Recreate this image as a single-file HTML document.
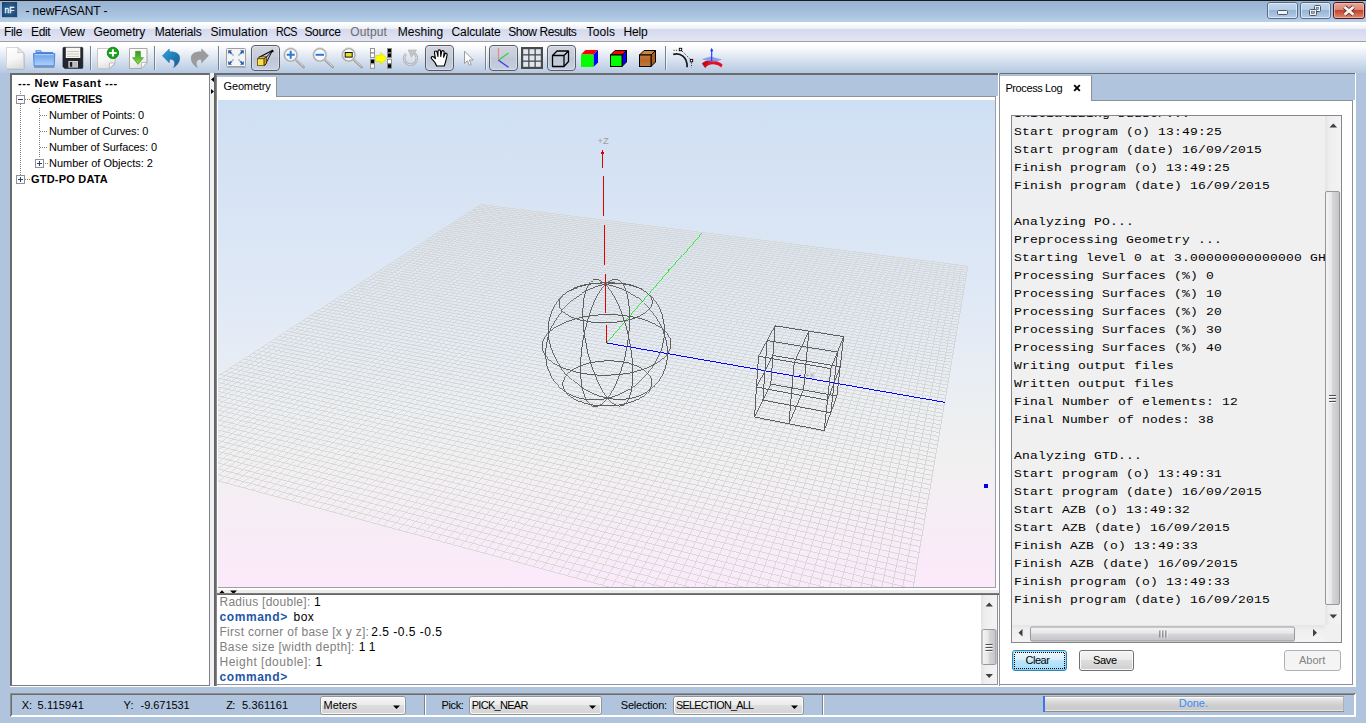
<!DOCTYPE html>
<html lang="en"><head><meta charset="utf-8"><title>newFASANT</title><style>
html,body{margin:0;padding:0}
body{width:1366px;height:723px;position:relative;overflow:hidden;background:#b0c4de;font-family:'Liberation Sans', sans-serif}
body div,body span.t,body svg{position:absolute}
span.t{white-space:pre}
.log{overflow:hidden;font:13px/18px 'Liberation Mono', monospace;letter-spacing:0.2px;color:#000;white-space:pre}
.log div div{position:static;height:20px}
</style></head>
<body>
<div style="left:0px;top:0px;width:1366px;height:22px;background:linear-gradient(180deg,#97b3d2 0%,#a3bddb 50%,#b6d0e9 100%);"></div>
<div style="left:0px;top:0px;width:1366px;height:1px;background:#1c1c1c;"></div>
<svg style="left:0;top:0" width="24" height="22" viewBox="0 0 24 22">
<defs><radialGradient id="aig" cx="0.5" cy="0.5" r="0.7"><stop offset="0" stop-color="#2f6a9e"/><stop offset="1" stop-color="#1c426a"/></radialGradient></defs>
<rect x="2.5" y="2.5" width="15.5" height="15.5" fill="#8ea5c0" opacity=".6"/>
<rect x="2" y="2" width="15" height="15" fill="url(#aig)"/>
<text x="4.600" y="13.100" font-family="Liberation Sans, sans-serif" font-size="9.600" font-weight="400" fill="#fff" stroke="#fff" stroke-width=".3" textLength="9.700" lengthAdjust="spacingAndGlyphs">nF</text>
</svg>
<span id="t0" class="t" style="left:25.40px;top:4.34px;font:400 12px/15px 'Liberation Sans', sans-serif;color:#000;letter-spacing:-0.083px;">- newFASANT -</span>
<svg style="left:1260px;top:0" width="106" height="22" viewBox="1260 0 106 22">
<defs>
<linearGradient id="wb1" x1="0" y1="0" x2="0" y2="1"><stop offset="0" stop-color="#c3d6ec"/><stop offset="0.48" stop-color="#b5cbe6"/><stop offset="0.5" stop-color="#98b5d6"/><stop offset="1" stop-color="#b4cde9"/></linearGradient>
<linearGradient id="wb2" x1="0" y1="0" x2="0" y2="1"><stop offset="0" stop-color="#e9a99c"/><stop offset="0.48" stop-color="#d98674"/><stop offset="0.5" stop-color="#c4432a"/><stop offset="1" stop-color="#de8f73"/></linearGradient>
</defs>
<rect x="1267.5" y="2.5" width="30" height="16" rx="2.5" fill="url(#wb1)" stroke="#566b89"/>
<rect x="1268.5" y="3.5" width="28" height="14" rx="1.5" fill="none" stroke="#e4eefa" opacity=".8"/>
<rect x="1300.5" y="2.5" width="30" height="16" rx="2.5" fill="url(#wb1)" stroke="#566b89"/>
<rect x="1301.5" y="3.5" width="28" height="14" rx="1.5" fill="none" stroke="#e4eefa" opacity=".8"/>
<rect x="1333.5" y="2.5" width="31" height="16" rx="2.5" fill="url(#wb2)" stroke="#4a1420"/>
<rect x="1334.5" y="3.5" width="29" height="14" rx="1.5" fill="none" stroke="#f3c3b6" opacity=".7"/>
<rect x="1277.5" y="10.5" width="10" height="4" rx="1" fill="#f4f4f4" stroke="#4a5568"/>
<rect x="1314.5" y="5.5" width="6" height="6" rx="1" fill="#f4f4f4" stroke="#4a5568"/><rect x="1316.5" y="7.5" width="2" height="2" fill="#9db8d8" stroke="#4a5568" stroke-width=".6"/>
<rect x="1309.5" y="9.5" width="7" height="6" rx="1" fill="#f4f4f4" stroke="#4a5568"/><rect x="1311.5" y="11.5" width="3" height="2" fill="#9db8d8" stroke="#4a5568" stroke-width=".6"/>
<path d="M1344.500 7l9 7.600M1353.500 7l-9 7.600" stroke="#5a2a2a" stroke-width="4.400" stroke-linecap="butt"/>
<path d="M1344.500 7l9 7.600M1353.500 7l-9 7.600" stroke="#f6f2f0" stroke-width="2.800" stroke-linecap="butt"/>
</svg>
<div style="left:0px;top:22px;width:1366px;height:19px;background:linear-gradient(180deg,#ffffff 0%,#fdfdfe 10%,#eceff7 35%,#d5d9ec 38%,#e1e5f5 100%);"></div>
<div style="left:0px;top:41px;width:1366px;height:1px;background:#a0a0a0;"></div>
<span id="t1" class="t" style="left:4.00px;top:25.34px;font:400 12px/15px 'Liberation Sans', sans-serif;color:#000;letter-spacing:-0.333px;">File</span>
<span id="t2" class="t" style="left:31.00px;top:25.34px;font:400 12px/15px 'Liberation Sans', sans-serif;color:#000;letter-spacing:-0.333px;">Edit</span>
<span id="t3" class="t" style="left:60.00px;top:25.34px;font:400 12px/15px 'Liberation Sans', sans-serif;color:#000;letter-spacing:-0.333px;">View</span>
<span id="t4" class="t" style="left:93.50px;top:25.34px;font:400 12px/15px 'Liberation Sans', sans-serif;color:#000;letter-spacing:-0.143px;">Geometry</span>
<span id="t5" class="t" style="left:154.70px;top:25.34px;font:400 12px/15px 'Liberation Sans', sans-serif;color:#000;letter-spacing:-0.200px;">Materials</span>
<span id="t6" class="t" style="left:210.40px;top:25.34px;font:400 12px/15px 'Liberation Sans', sans-serif;color:#000;letter-spacing:0.133px;">Simulation</span>
<span id="t7" class="t" style="left:276.40px;top:25.34px;font:400 12px/15px 'Liberation Sans', sans-serif;color:#000;letter-spacing:-0.700px;transform:scaleX(0.896);transform-origin:0 0;">RCS</span>
<span id="t8" class="t" style="left:304.40px;top:25.34px;font:400 12px/15px 'Liberation Sans', sans-serif;color:#000;letter-spacing:-0.320px;">Source</span>
<span id="t9" class="t" style="left:350.30px;top:25.34px;font:400 12px/15px 'Liberation Sans', sans-serif;color:#6d6d6d;letter-spacing:0.120px;">Output</span>
<span id="t10" class="t" style="left:397.70px;top:25.34px;font:400 12px/15px 'Liberation Sans', sans-serif;color:#000;letter-spacing:0.033px;">Meshing</span>
<span id="t11" class="t" style="left:451.50px;top:25.34px;font:400 12px/15px 'Liberation Sans', sans-serif;color:#000;letter-spacing:-0.100px;">Calculate</span>
<span id="t12" class="t" style="left:508.30px;top:25.34px;font:400 12px/15px 'Liberation Sans', sans-serif;color:#000;letter-spacing:-0.436px;">Show Results</span>
<span id="t13" class="t" style="left:586.60px;top:25.34px;font:400 12px/15px 'Liberation Sans', sans-serif;color:#000;letter-spacing:0.100px;">Tools</span>
<span id="t14" class="t" style="left:623.50px;top:25.34px;font:400 12px/15px 'Liberation Sans', sans-serif;color:#000;letter-spacing:-0.200px;">Help</span>
<div style="left:0px;top:42px;width:1366px;height:31px;background:linear-gradient(180deg,#ffffff 0%,#fefefe 12%,#b5c8e2 100%);"></div>
<svg style="left:0;top:42px" width="740" height="31" viewBox="0 42 740 31">
<defs>
<linearGradient id="prs" x1="0" y1="0" x2="0" y2="1"><stop offset="0" stop-color="#d2d6e0"/><stop offset="0.45" stop-color="#c6ccd9"/><stop offset="0.5" stop-color="#bfc6d5"/><stop offset="1" stop-color="#c6d0e2"/></linearGradient>
<linearGradient id="pap" x1="0.3" y1="0" x2="0.6" y2="1"><stop offset="0" stop-color="#ffffff"/><stop offset="0.55" stop-color="#f6f6f6"/><stop offset="1" stop-color="#dedede"/></linearGradient>
<linearGradient id="fol" x1="0" y1="0" x2="0" y2="1"><stop offset="0" stop-color="#6a9ee8"/><stop offset="1" stop-color="#aed2fd"/></linearGradient>
<linearGradient id="grn" x1="0" y1="0" x2="0" y2="1"><stop offset="0" stop-color="#2f9a1e"/><stop offset="1" stop-color="#8bdc4a"/></linearGradient>
<linearGradient id="und" x1="0" y1="0" x2="1" y2="1"><stop offset="0" stop-color="#2fa6e0"/><stop offset="1" stop-color="#15578f"/></linearGradient>
<linearGradient id="wood" x1="0" y1="0" x2="0" y2="1"><stop offset="0" stop-color="#c7782f"/><stop offset="0.5" stop-color="#b5682a"/><stop offset="1" stop-color="#c27a38"/></linearGradient>
</defs><path d="M7 69h16.800M24 53.500v15.300" stroke="#9c9c9c" stroke-width="1" opacity=".75" fill="none"/><path d="M6.500 47.500h11.500l5.500 5.500v15.500H6.500z" fill="url(#pap)" stroke="#d2d2d2" stroke-width=".9"/><path d="M18 47.500c.3 2.500.2 4 -.4 5.300 1.800-.5 3.800-.4 5.900.2z" fill="#ececec" stroke="#bdbdbd" stroke-width=".7" stroke-linejoin="round"/><path d="M35.500 50.200h5.300l1.300 1.700h11v3H35.500z" fill="#4f88dc"/><path d="M36.500 50.900h3.800l.8 1.200h-4.600z" fill="#9dc0f4"/><path d="M34 67h20.500" stroke="#4c5f86" stroke-width="1.200" opacity=".8"/><path d="M33.500 53.600h21.300l-.6 12.200h-20.100z" fill="url(#fol)" stroke="#3f7ed8" stroke-width=".9"/><path d="M34.600 54.700h19.200" stroke="#cfe2fd" stroke-width=".8"/><path d="M64 47.300h17.800a1.100 1.100 0 0 1 1.100 1.100v19a1.100 1.100 0 0 1-1.100 1.100H64.800l-1.900-1.700V48.400a1.100 1.100 0 0 1 1.100-1.100z" fill="#25252d" stroke="#17171c" stroke-width=".5"/><rect x="65.800" y="47.600" width="14.500" height="10.400" fill="#f6f6f6"/><path d="M67 51.500h12M67 54h12M67 56.400h12" stroke="#cfc6bc" stroke-width="1"/><rect x="68.400" y="61" width="9.600" height="6.600" fill="#d4d4d4"/><rect x="69.800" y="62" width="2.500" height="4.800" fill="#1c1c24"/><rect x="73.500" y="62" width="3.800" height="4.800" fill="#b8b8b8"/><rect x="90" y="46" width="1" height="24" fill="#7d838c"/><rect x="91" y="46" width="1" height="24" fill="#fff" opacity=".55"/><path d="M98 49.5h17v14l-5.5 5.5H98z" fill="#b9bfc8" opacity=".6" transform="translate(.6 .6)"/><path d="M97.5 48.5h17.5v14.5l-5.5 5.5H97.5z" fill="url(#pap)" stroke="#c6c6c6"/><path d="M115 63h-5.5v5.5z" fill="#fafafa" stroke="#bcbcbc" stroke-linejoin="round"/><circle cx="112.900" cy="52.900" r="5.700" fill="#17a317" stroke="#0d7d0d" stroke-width=".8"/><path d="M112.900 49.200v7.400M109.200 52.900h7.400" stroke="#fff" stroke-width="2"/><path d="M130 49.5h17v13.5l-5.5 5.5H130z" fill="#b9bfc8" opacity=".6" transform="translate(.6 .6)"/><path d="M129.500 48.500h17.500v14l-5.500 6H129.500z" fill="url(#pap)" stroke="#a9a9a9"/><path d="M147 62.500h-5.500v6z" fill="#fafafa" stroke="#bcbcbc" stroke-linejoin="round"/><path d="M135.600 51.300h4.800v6.400h3l-5.400 6.600-5.400-6.600h3z" fill="url(#grn)" stroke="#3c9a28" stroke-width=".7" stroke-linejoin="round"/><rect x="154" y="46" width="1" height="24" fill="#7d838c"/><rect x="155" y="46" width="1" height="24" fill="#fff" opacity=".55"/><path d="M162.400 55.700L169.200 49l.3 2.900C175 51.500 179.700 53.500 179.700 58c0 4-2.700 7.500-6.100 9.500 1.700-3.500 1.400-6.500-1.100-7.700-1-.4-2-.5-3-.4l-.3 3.300z" fill="url(#und)" stroke="#1f6ba8" stroke-width=".5" stroke-linejoin="round"/><g transform="translate(370.900 0) scale(-1 1)"><path d="M162.400 55.700L169.200 49l.3 2.900C175 51.500 179.700 53.500 179.700 58c0 4-2.700 7.500-6.100 9.500 1.700-3.500 1.400-6.500-1.100-7.700-1-.4-2-.5-3-.4l-.3 3.300z" fill="#9b9b9b" stroke="#8a8a8a" stroke-width=".5" stroke-linejoin="round"/></g><rect x="218" y="46" width="1" height="24" fill="#7d838c"/><rect x="219" y="46" width="1" height="24" fill="#fff" opacity=".55"/><rect x="226.500" y="48.500" width="19" height="18" rx="1" fill="#f4f4f2" stroke="#9c9c9c"/><path d="M227 67.500h19" stroke="#8a909a" stroke-width="1" opacity=".5"/><g fill="#2a5cb0"><path d="M228.200 50.200h3.800l-1.300 1.300 1.500 1.500-1.200 1.200-1.500-1.500-1.300 1.300z"/><path d="M243.800 50.200v3.800l-1.300-1.300-1.500 1.500-1.200-1.200 1.500-1.500-1.300-1.300z"/><path d="M228.200 64.800v-3.800l1.300 1.300 1.500-1.500 1.200 1.200-1.500 1.500 1.300 1.300z"/><path d="M243.800 64.800h-3.800l1.300-1.300-1.500-1.500 1.200-1.200 1.500 1.500 1.300-1.300z"/></g><g stroke="#5a86c8" stroke-width="1.600" opacity=".55"><path d="M231.800 53.800l1.800 1.800M240.200 53.800l-1.800 1.800M231.800 61.200l1.800-1.800M240.200 61.200l-1.800-1.800"/></g><rect x="251.5" y="45.5" width="28" height="25" rx="3.5" fill="url(#prs)" stroke="#585c66"/><rect x="252.5" y="46.5" width="26" height="23" rx="2.5" fill="none" stroke="#fff" opacity=".3"/><path d="M272.700 50.200l-14 7.200" stroke="#000" stroke-width="1.100" fill="none"/><path d="M272.700 50.200l-6.300 7M272.700 50.200l-8 15.400" stroke="#000" stroke-width=".9" fill="none"/><path d="M272.900 49.600l.9 2.700-2.600-.2z" fill="#000"/><path d="M257.500 58.800l2.500-2h6.400l-2.500 2z" fill="#f8e060" stroke="#000" stroke-width=".6"/><path d="M263.900 58.800l2.500-2v6.800l-2.500 2z" fill="#f09a18" stroke="#000" stroke-width=".6"/><rect x="257.500" y="58.800" width="6.400" height="6.800" fill="#fbe04a" stroke="#4a3c00" stroke-width=".7"/><path d="M295.9 59.8L303.7 67.2" stroke="#9c9c9c" stroke-width="2.400" stroke-linecap="round"/><path d="M296.09999999999997 59.6L303.5 66.6" stroke="#e2e2e2" stroke-width="1"/><circle cx="290.7" cy="54.900" r="6.300" fill="#f8fafd" fill-opacity=".9" stroke="#adadad" stroke-width="1.500"/><circle cx="290.7" cy="54.900" r="7.300" fill="none" stroke="#d4d4d4" stroke-width=".6"/><path d="M290.700 50.800v8M286.700 54.800h8" stroke="#2f78d6" stroke-width="2"/><path d="M325.0 59.8L332.8 67.2" stroke="#9c9c9c" stroke-width="2.400" stroke-linecap="round"/><path d="M325.2 59.6L332.6 66.6" stroke="#e2e2e2" stroke-width="1"/><circle cx="319.8" cy="54.900" r="6.300" fill="#f8fafd" fill-opacity=".9" stroke="#adadad" stroke-width="1.500"/><circle cx="319.8" cy="54.900" r="7.300" fill="none" stroke="#d4d4d4" stroke-width=".6"/><path d="M315.600 54.800h8.400" stroke="#2f78d6" stroke-width="2"/><path d="M353.9 59.8L361.7 67.2" stroke="#9c9c9c" stroke-width="2.400" stroke-linecap="round"/><path d="M354.09999999999997 59.6L361.5 66.6" stroke="#e2e2e2" stroke-width="1"/><circle cx="348.7" cy="54.900" r="6.300" fill="#f8fafd" fill-opacity=".9" stroke="#adadad" stroke-width="1.500"/><circle cx="348.7" cy="54.900" r="7.300" fill="none" stroke="#d4d4d4" stroke-width=".6"/><rect x="345.200" y="52.500" width="7" height="4.600" fill="#e8e020" stroke="#111" stroke-width="1"/><rect x="370.500" y="48.5" width="4" height="4.300" fill="#fff" stroke="#8a8a8a" stroke-width=".9"/><rect x="370.500" y="53.1" width="4" height="4.300" fill="#fff" stroke="#8a8a8a" stroke-width=".9"/><rect x="370.500" y="59.3" width="4" height="4.300" fill="#000" stroke="#8a8a8a" stroke-width=".9"/><rect x="370.500" y="63.9" width="4" height="4.300" fill="#fff" stroke="#8a8a8a" stroke-width=".9"/><rect x="387.500" y="48.5" width="4" height="4.300" fill="#000" stroke="#8a8a8a" stroke-width=".9"/><rect x="387.500" y="53.1" width="4" height="4.300" fill="#000" stroke="#8a8a8a" stroke-width=".9"/><rect x="387.500" y="59.3" width="4" height="4.300" fill="#fff" stroke="#8a8a8a" stroke-width=".9"/><rect x="387.500" y="63.9" width="4" height="4.300" fill="#000" stroke="#8a8a8a" stroke-width=".9"/><path d="M375.800 55.600h5v-3l6.100 5.900-6.100 5.900v-2.800h-5z" fill="#ffff00" stroke="#c8c800" stroke-width=".5"/><path d="M413.300 52.600a6.400 6.400 0 1 1-7.300 1.200" fill="none" stroke="#b0b0b0" stroke-width="2.600"/><path d="M413.300 52.600a6.400 6.400 0 1 1-7.300 1.200" fill="none" stroke="#dcdcdc" stroke-width="1"/><path d="M408.300 50h8.300l-5.300 7.200z" fill="#c6c6c6" stroke="#acacac" stroke-width=".6" stroke-linejoin="round"/><rect x="425.5" y="45.5" width="28" height="25" rx="3.5" fill="url(#prs)" stroke="#585c66"/><rect x="426.5" y="46.5" width="26" height="23" rx="2.5" fill="none" stroke="#fff" opacity=".3"/><path d="M436.600 66c-.6-2.200-1.800-4-3.400-5.600-1.200-1.200-2.300-2.300-1.900-3.200.5-1 1.700-.9 2.500-.2l1.600 1.700-.9-5.800c-.2-1.300.5-1.900 1.200-1.900.8 0 1.300.6 1.500 1.600l.7 3.900.1-5.100c0-1 .6-1.500 1.300-1.500s1.300.5 1.300 1.500l.2 5 .7-4.500c.2-1 .8-1.400 1.500-1.300.7.100 1.200.700 1.100 1.700l-.5 4.900 1.200-3c.4-.9 1-1.200 1.600-1 .7.300.9 1 .7 1.900l-1 4.500c-.4 2-.8 4-1.900 6.400z" fill="#fff" stroke="#000" stroke-width="1.150" stroke-linejoin="round"/><path d="M464.500 51.200v12.200l2.900-2.700 2 4.700 1.900-.8-2-4.600h4z" fill="#fff" stroke="#9c9c9c" stroke-width="1" stroke-linejoin="round"/><rect x="485" y="46" width="1" height="24" fill="#7d838c"/><rect x="486" y="46" width="1" height="24" fill="#fff" opacity=".55"/><rect x="489.5" y="45.5" width="28" height="25" rx="3.5" fill="url(#prs)" stroke="#585c66"/><rect x="490.5" y="46.5" width="26" height="23" rx="2.5" fill="none" stroke="#fff" opacity=".3"/><path d="M498.500 48v12.500" stroke="#e88a8a" stroke-width="1.300"/><path d="M498.500 60.300l10-7.300" stroke="#30d040" stroke-width="1.200"/><path d="M498.500 60.300l10 7" stroke="#3a3af0" stroke-width="1.300"/><rect x="521" y="47" width="22" height="22" fill="#4a4a4a"/><rect x="523.2" y="49.2" width="5" height="5" fill="#dfe6f0"/><rect x="529.5" y="49.2" width="5" height="5" fill="#dfe6f0"/><rect x="535.8" y="49.2" width="5" height="5" fill="#dfe6f0"/><rect x="523.2" y="55.5" width="5" height="5" fill="#dfe6f0"/><rect x="529.5" y="55.5" width="5" height="5" fill="#dfe6f0"/><rect x="535.8" y="55.5" width="5" height="5" fill="#dfe6f0"/><rect x="523.2" y="61.8" width="5" height="5" fill="#dfe6f0"/><rect x="529.5" y="61.8" width="5" height="5" fill="#dfe6f0"/><rect x="535.8" y="61.8" width="5" height="5" fill="#dfe6f0"/><rect x="547.5" y="45.5" width="28" height="25" rx="3.5" fill="url(#prs)" stroke="#585c66"/><rect x="548.5" y="46.5" width="26" height="23" rx="2.5" fill="none" stroke="#fff" opacity=".3"/><path d="M552.500 55.500h11.500v11h-11.500zM552.500 55.500l4.500-4.500h11.500l-4.500 4.500M568.500 51v10.500l-4.500 5" fill="none" stroke="#000" stroke-width="1.300" stroke-linejoin="round"/><path d="M581 54.500l4.500-4.500h12.500l-4.500 4.500z" fill="#ff0000"/><path d="M593.500 54.500l4.500-4.500v12.500l-4.500 4.500z" fill="#0000ff"/><rect x="581" y="54.500" width="12.500" height="12.500" fill="#00ff00"/><path d="M610.500 55l4.500-4.500h11.500l-4.500 4.500z" fill="#ff0000" stroke="#000" stroke-width="1"/><path d="M622 55l4.500-4.500v11.500l-4.500 4.500z" fill="#0000ff" stroke="#000" stroke-width="1"/><rect x="610.500" y="55" width="11.500" height="11.500" fill="#00ff00" stroke="#000" stroke-width="1"/><path d="M639.500 55l4.500-4.500h11.500l-4.500 4.500z" fill="#c98440" stroke="#000" stroke-width="1"/><path d="M651 55l4.500-4.500v11.500l-4.500 4.500z" fill="#a85c20" stroke="#000" stroke-width="1"/><rect x="639.500" y="55" width="11.500" height="11.500" fill="url(#wood)" stroke="#000" stroke-width="1"/><rect x="665" y="46" width="1" height="24" fill="#7d838c"/><rect x="666" y="46" width="1" height="24" fill="#fff" opacity=".55"/><path d="M673.200 54.400c7-2.300 14.300 2.700 13.900 12.800" fill="none" stroke="#1a1a1a" stroke-width="1.700"/><path d="M673.500 50.300h4.500M682 51l8.500 8.500M691.500 62.500v5" stroke="#333" stroke-width=".9" stroke-dasharray="1.200 1.200"/><rect x="679.300" y="48.300" width="2.400" height="2.400" fill="#fff" stroke="#000" stroke-width=".9"/><rect x="690.300" y="59.400" width="2.400" height="2.400" fill="#fff" stroke="#000" stroke-width=".9"/><path d="M702 63.600C706 59.300 717 59.300 722.600 64.600L721.300 67.500C716 63.300 709 63 705.200 67.900z" fill="#e80c1c"/><path d="M702 63.600C703.500 62 705.500 61 707.500 60.600L708 63.500C707 64 706 65.500 705.200 67.900z" fill="#a8101c" opacity=".7"/><path d="M701.500 59.200l9-2.700 11.500 3-8 3z" fill="#7080e0" opacity=".7"/><path d="M711.700 61v-11" stroke="#2030ff" stroke-width="1.100"/><path d="M711.700 47.800l1.600 3.400h-3.200z" fill="#2030ff"/></svg>
<div style="left:10px;top:73px;width:200px;height:614px;background:#fff;"></div>
<div style="left:10px;top:73px;width:200px;height:613px;background:#fff;border-left:2px solid #6a6a6a;border-top:2px solid #6a6a6a;border-right:1px solid #7c828c;border-bottom:1px solid #7c7c7c;box-sizing:border-box;"></div>
<svg style="left:12px;top:75px" width="60" height="120" viewBox="12 75 60 120" shape-rendering="crispEdges"><path d="M20.5 91V95" stroke="#808080" stroke-width="1" stroke-dasharray="1 1"/><path d="M20.5 104V175" stroke="#808080" stroke-width="1" stroke-dasharray="1 1"/><path d="M25 99.5H31" stroke="#808080" stroke-width="1" stroke-dasharray="1 1"/><path d="M25 179.5H31" stroke="#808080" stroke-width="1" stroke-dasharray="1 1"/><path d="M39.5 108V158" stroke="#808080" stroke-width="1" stroke-dasharray="1 1"/><path d="M40 115.5H48" stroke="#808080" stroke-width="1" stroke-dasharray="1 1"/><path d="M40 131.5H48" stroke="#808080" stroke-width="1" stroke-dasharray="1 1"/><path d="M40 147.5H48" stroke="#808080" stroke-width="1" stroke-dasharray="1 1"/><path d="M45 163.5H48" stroke="#808080" stroke-width="1" stroke-dasharray="1 1"/><rect x="16.5" y="95.5" width="8" height="8" rx="1" fill="#fcfcfc" stroke="#919191"/><path d="M18 99.5h5" stroke="#2c3c8c" stroke-width="1"/><rect x="35.5" y="159.5" width="8" height="8" rx="1" fill="#fcfcfc" stroke="#919191"/><path d="M37 163.5h5" stroke="#2c3c8c" stroke-width="1"/><path d="M39.5 161v5" stroke="#2c3c8c" stroke-width="1"/><rect x="16.5" y="175.5" width="8" height="8" rx="1" fill="#fcfcfc" stroke="#919191"/><path d="M18 179.5h5" stroke="#2c3c8c" stroke-width="1"/><path d="M20.5 177v5" stroke="#2c3c8c" stroke-width="1"/></svg>
<span id="t15" class="t" style="left:18.00px;top:76.19px;font:700 11px/14px 'Liberation Sans', sans-serif;color:#000;letter-spacing:0.588px;">--- New Fasant ---</span>
<span id="t16" class="t" style="left:31.00px;top:92.19px;font:700 11px/14px 'Liberation Sans', sans-serif;color:#000;letter-spacing:-0.222px;">GEOMETRIES</span>
<span id="t17" class="t" style="left:49.00px;top:108.19px;font:400 11px/14px 'Liberation Sans', sans-serif;color:#000;letter-spacing:-0.111px;">Number of Points: 0</span>
<span id="t18" class="t" style="left:49.00px;top:124.19px;font:400 11px/14px 'Liberation Sans', sans-serif;color:#000;letter-spacing:-0.111px;">Number of Curves: 0</span>
<span id="t19" class="t" style="left:49.00px;top:140.19px;font:400 11px/14px 'Liberation Sans', sans-serif;color:#000;letter-spacing:-0.100px;">Number of Surfaces: 0</span>
<span id="t20" class="t" style="left:49.00px;top:156.19px;font:400 11px/14px 'Liberation Sans', sans-serif;color:#000;letter-spacing:0.000px;">Number of Objects: 2</span>
<span id="t21" class="t" style="left:31.00px;top:172.19px;font:700 11px/14px 'Liberation Sans', sans-serif;color:#000;letter-spacing:0.200px;">GTD-PO DATA</span>
<div style="left:210px;top:73px;width:4px;height:614px;background:#f2f2f2;"></div>
<svg style="position:absolute;left:210px;top:76px" width="4" height="20" viewBox="0 0 4 20"><path d="M4 1v5l-3-2.5zM1 13v5l3-2.5z" fill="#000"/></svg>
<div style="left:214px;top:73px;width:786px;height:614px;background:#fff;"></div>
<div style="left:214px;top:73px;width:784px;height:2px;background:#6b6b6b;"></div>
<div style="left:214px;top:73px;width:1px;height:613px;background:#636363;"></div>
<div style="left:215px;top:73px;width:1px;height:613px;background:#6b6b6b;"></div>
<div style="left:216px;top:75px;width:1px;height:611px;background:#838993;"></div>
<div style="left:217px;top:75px;width:781px;height:21px;background:#b0c4de;"></div>
<div style="left:996px;top:96px;width:2px;height:4px;background:#fff;"></div>
<div style="left:217px;top:96px;width:779px;height:1px;background:#8d939d;"></div>
<div style="left:995px;top:96px;width:1px;height:5px;background:#8d939d;"></div>
<div style="left:217px;top:77px;width:59px;height:20px;background:#fff;border-right:1px solid #8a8f98;"></div>
<span id="t22" class="t" style="left:223.50px;top:79.19px;font:400 11px/14px 'Liberation Sans', sans-serif;color:#000;letter-spacing:-0.143px;">Geometry</span>
<div style="left:998px;top:73px;width:1px;height:613px;background:#fff;"></div>
<div style="left:999px;top:73px;width:1px;height:613px;background:#8e939c;"></div>
<div style="left:218px;top:100px;width:778px;height:488px;background:#9aa0a8;"></div>
<svg style="position:absolute;left:218px;top:100px" width="777" height="487" viewBox="218 100 777 487" shape-rendering="crispEdges">
<defs><linearGradient id="vbg" x1="0" y1="0" x2="0" y2="1"><stop offset="0" stop-color="#cfdff3"/><stop offset="0.45" stop-color="#e2eaf6"/><stop offset="0.62" stop-color="#eceff2"/><stop offset="0.76" stop-color="#f2f0f1"/><stop offset="1" stop-color="#fce9fa"/></linearGradient></defs>
<rect x="218" y="100" width="777" height="487" fill="url(#vbg)"/>
<path d="M104.6 450L480.6 204.5M110.3 451.5L484.7 205M116.1 453.1L488.8 205.6M121.9 454.7L492.8 206.1M127.7 456.2L496.9 206.6M133.5 457.8L501 207.1M541.8 568.8L766.1 240.6M550.3 571.1L771.2 241.3M558.8 573.4L776.3 241.9M567.4 575.7L781.4 242.6M576.1 578.1L786.5 243.2M584.8 580.4L791.7 243.9" stroke="#d6d8d7" stroke-width="0.84" fill="none"/>
<path d="M104.6 450L899.8 666M110.8 445.9L901.1 658.4M117 441.9L902.3 650.8M123.1 437.9L903.6 643.4M129.1 434L904.8 636.2M135 430.1L906.1 629M140.9 426.3L907.2 622M146.6 422.5L908.4 615.2M152.3 418.8L909.6 608.4M157.9 415.2L910.7 601.8M163.5 411.5L911.8 595.2M169 407.9L912.9 588.8M174.4 404.4L914 582.5M179.8 400.9L915 576.3M185 397.5L916.1 570.2M190.3 394.1L917.1 564.2M195.4 390.7L918.1 558.3M200.5 387.4L919.1 552.5M772.7 631.5L899.2 257.5M782.9 634.3L904.8 258.2M793.1 637L910.4 258.9M803.4 639.8L916 259.6M813.8 642.7L921.7 260.3M824.2 645.5L927.4 261M834.8 648.4L933.1 261.8M845.4 651.3L938.8 262.5" stroke="#d6d8d7" stroke-width="0.96" fill="none"/>
<path d="M139.4 459.4L505.2 207.6M145.3 461L509.3 208.2M151.3 462.7L513.5 208.7M157.3 464.3L517.6 209.2M163.3 465.9L521.8 209.7M169.4 467.6L526 210.3M175.5 469.2L530.2 210.8M181.6 470.9L534.4 211.3M187.7 472.6L538.7 211.9M193.9 474.2L542.9 212.4M200.2 475.9L547.2 212.9M500.3 557.5L741 237.5M508.5 559.7L746 238.1M516.7 562L751 238.7M525 564.2L756 239.4M533.4 566.5L761 240" stroke="#d6d8d7" stroke-width="0.81" fill="none"/>
<path d="M206.5 477.6L551.5 213.5M212.8 479.4L555.8 214M219.1 481.1L560.1 214.6M225.5 482.8L564.4 215.1M231.9 484.6L568.8 215.7M238.4 486.3L573.1 216.2M244.9 488.1L577.5 216.8M251.5 489.9L581.9 217.3M258 491.7L586.3 217.9M452.3 544.4L711.4 233.7M460.2 546.6L716.3 234.3M468.1 548.7L721.2 235M476.1 550.9L726.1 235.6M484.1 553.1L731.1 236.2M492.2 555.3L736 236.8" stroke="#d6d8d7" stroke-width="0.78" fill="none"/>
<path d="M205.5 384.1L920.1 546.8M210.5 380.8L921 541.1M215.4 377.6L922 535.6M220.3 374.5L922.9 530.2M225.1 371.3L923.8 524.8M229.8 368.2L924.7 519.5M234.5 365.2L925.6 514.3M239.1 362.1L926.5 509.2M243.7 359.2L927.3 504.1M248.3 356.2L928.2 499.2M252.7 353.3L929 494.3M257.2 350.4L929.8 489.4M261.5 347.5L930.6 484.7M265.9 344.7L931.4 480M270.2 341.9L932.2 475.4M274.4 339.1L933 470.8M278.6 336.4L933.8 466.4M282.7 333.7L934.5 461.9M286.8 331L935.3 457.6M290.9 328.4L936 453.3M294.9 325.8L936.7 449M298.9 323.2L937.4 444.8M302.8 320.6L938.1 440.7M306.7 318.1L938.8 436.6M310.5 315.6L939.5 432.6M314.3 313.1L940.2 428.7M318.1 310.6L940.8 424.8M321.8 308.2L941.5 420.9M325.5 305.8L942.2 417.1M329.1 303.4L942.8 413.3M332.8 301L943.4 409.6M336.3 298.7L944 406M339.9 296.4L944.7 402.3M343.4 294.1L945.3 398.8M346.9 291.8L945.9 395.3M350.3 289.6L946.5 391.8M353.7 287.4L947.1 388.3M357.1 285.2L947.6 384.9M360.4 283L948.2 381.6M363.7 280.9L948.8 378.3M367 278.7L949.3 375M370.2 276.6L949.9 371.8M373.4 274.5L950.4 368.6M376.6 272.4L951 365.4M379.7 270.4L951.5 362.3M382.9 268.3L952 359.2M386 266.3L952.5 356.2M389 264.3L953 353.2M392 262.3L953.5 350.2M395 260.4L954 347.3M398 258.4L954.5 344.3M401 256.5L955 341.5M403.9 254.6L955.5 338.6M406.8 252.7L956 335.8M409.7 250.9L956.5 333M412.5 249L956.9 330.3M415.3 247.2L957.4 327.6M418.1 245.3L957.9 324.9M420.9 243.5L958.3 322.2M423.6 241.7L958.8 319.6M426.3 240L959.2 317M429 238.2L959.6 314.4M431.7 236.5L960.1 311.9M434.4 234.7L960.5 309.4M437 233L960.9 306.9M439.6 231.3L961.3 304.4M442.2 229.6L961.8 302M444.7 228L962.2 299.6M447.3 226.3L962.6 297.2M449.8 224.7L963 294.8M452.3 223L963.4 292.5M454.7 221.4L963.8 290.2M457.2 219.8L964.2 287.9M459.6 218.2L964.5 285.6M462 216.7L964.9 283.3M464.4 215.1L965.3 281.1M466.8 213.6L965.7 278.9M469.2 212L966.1 276.7M856.1 654.2L944.6 263.2M471.5 210.5L966.4 274.6M866.9 657.1L950.4 263.9M473.8 209L966.8 272.4M877.8 660L956.2 264.7M476.1 207.5L967.1 270.3M888.7 663L962 265.4M478.4 206L967.5 268.2M899.8 666L967.9 266.2M480.6 204.5L967.9 266.2" stroke="#d6d8d7" stroke-width="0.99" fill="none"/>
<path d="M264.7 493.5L590.7 218.5M271.3 495.3L595.2 219M278 497.1L599.6 219.6M284.8 498.9L604.1 220.1M291.6 500.8L608.6 220.7M298.4 502.6L613.1 221.3M305.3 504.5L617.6 221.8M312.2 506.4L622.1 222.4M406.2 531.9L682.6 230.1M413.8 534L687.3 230.7M421.4 536L692.1 231.3M429 538.1L696.9 231.9M436.7 540.2L701.7 232.5M444.5 542.3L706.6 233.1" stroke="#d6d8d7" stroke-width="0.75" fill="none"/>
<path d="M319.2 508.3L626.7 223M326.2 510.2L631.2 223.6M333.2 512.1L635.8 224.2M340.3 514L640.4 224.7M347.4 516L645 225.3M354.6 517.9L649.7 225.9M361.8 519.9L654.3 226.5M369.1 521.8L659 227.1M376.4 523.8L663.7 227.7M383.8 525.8L668.4 228.3M391.2 527.8L673.1 228.9M398.7 529.9L677.8 229.5" stroke="#d6d8d7" stroke-width="0.72" fill="none"/>
<path d="M593.5 582.8L796.9 244.5M602.4 585.2L802.1 245.2M611.3 587.6L807.3 245.8M620.2 590.1L812.5 246.5M629.2 592.5L817.8 247.2M638.3 595L823.1 247.8" stroke="#d6d8d7" stroke-width="0.87" fill="none"/>
<path d="M647.5 597.5L828.4 248.5M656.7 600L833.7 249.2M666 602.5L839 249.9M675.3 605L844.4 250.5M684.8 607.6L849.8 251.2M694.3 610.2L855.2 251.9" stroke="#d6d8d7" stroke-width="0.90" fill="none"/>
<path d="M703.8 612.8L860.6 252.6M713.4 615.4L866 253.3M723.1 618L871.5 254M732.9 620.7L877 254.7M742.8 623.4L882.5 255.4M752.7 626.1L888 256.1M762.7 628.8L893.6 256.8" stroke="#d6d8d7" stroke-width="0.93" fill="none"/>
<path d="M606.5 343.1L944.7 402.3" stroke="#0000ff" stroke-width="0.99" fill="none"/>
<path d="M606.5 343.1L701.7 232.5" stroke="#00ec00" stroke-width="0.75" fill="none"/>
<rect x="606" y="325" width="1" height="18" fill="#e00000"/>
<rect x="605" y="274" width="1" height="39" fill="#e00000"/>
<rect x="604" y="225" width="1" height="40" fill="#e00000"/>
<rect x="603" y="176" width="1" height="40" fill="#e00000"/>
<rect x="602" y="150" width="1" height="18" fill="#e00000"/>
<rect x="601" y="152" width="3" height="2" fill="#e00000"/>
<path d="M605.2 284.3L613.3 286M665.6 338.3L667.1 346.1M667.1 346.1L667.6 353.8M667.6 353.8L666.9 361.2M629.9 398.5L622.7 399.4M622.7 399.4L615.2 399.3M615.2 399.3L607.7 398.3M549.1 340.3L548.2 332.9M548.2 332.9L548.3 325.7M548.3 325.7L549.4 318.6M582 285.3L589.5 283.9M589.5 283.9L597.2 283.6M597.2 283.6L605.2 284.3M605.2 284.3L613.2 283.3M613.2 283.3L621.1 283.3M621.1 283.3L628.6 284.4M662.8 316.5L664.2 323.5M664.2 323.5L664.6 330.7M664.6 330.7L664 338.1M664 338.1L662.5 345.5M607.7 398.3L600.1 399.6M600.1 399.6L592.6 399.9M592.6 399.9L585.3 399.4M585.3 399.4L578.3 397.8M546.6 363.5L545.7 356.1M545.7 356.1L545.8 348.4M545.8 348.4L547 340.5M611.7 279.7L614.8 279.1M614.8 279.1L617.6 279.6M627.7 297L628.7 302.8M628.7 302.8L629.4 309.3M629.4 309.3L629.6 316.3M629.6 316.3L629.5 323.6M629.5 323.6L629 331.2M629 331.2L628.1 339M628.1 339L626.9 346.8M626.9 346.8L625.4 354.5M598.3 406L595.3 406.6M595.3 406.6L592.5 406.1M582.1 387.2L581.1 380.6M581.1 380.6L580.6 373.1M580.6 373.1L580.6 365.1M580.6 365.1L581 356.6M581 356.6L581.9 347.8M581.9 347.8L583.2 338.9M583.2 338.9L585 330.1M598.7 280L595.8 279.5M595.8 279.5L593 280.1M585 292.5L583.9 297.8M583.9 297.8L583.2 303.7M583.2 303.7L582.9 310.2M582.9 310.2L582.9 317.1M582.9 317.1L583.3 324.5M583.3 324.5L584.1 332M584.1 332L585.3 339.8M585.3 339.8L586.8 347.5M617.1 405.7L620 406.1M620 406.1L622.8 405.5M630.9 392.2L632 386.3M632 386.3L632.7 379.6M632.7 379.6L632.9 372.2M632.9 372.2L632.6 364.1M632.6 364.1L631.8 355.7M631.8 355.7L630.6 346.9M630.6 346.9L628.9 338.1M651.8 384.6L651.9 381.6M651.9 381.6L651.2 378.7M628.6 363.2L623.5 362.1M623.5 362.1L618.2 361.4M618.2 361.4L612.7 360.9M612.7 360.9L607.1 360.8M607.1 360.8L601.5 361.1M601.5 361.1L596 361.8M596 361.8L590.7 362.7M563.4 380.3L562.8 383.3M562.8 383.3L563 386.2M589.8 404.4L595.5 405.4M595.5 405.4L601.5 405.9M601.5 405.9L607.6 406M607.6 406L613.6 405.7M613.6 405.7L619.6 404.9M619.6 404.9L625.3 403.8M670.9 345.9L670.9 341.9M636.9 317.7L629.6 316.3M629.6 316.3L622 315.3M622 315.3L614.2 314.7M614.2 314.7L606.2 314.7M606.2 314.7L598.3 315M598.3 315L590.5 315.9M590.5 315.9L582.9 317.1M542.1 344.3L542.2 348.3M580.6 373.1L589.1 374.4M589.1 374.4L597.8 375.1M597.8 375.1L606.8 375.2M606.8 375.2L615.7 374.8M615.7 374.8L624.5 373.8M624.5 373.8L632.9 372.2M652.1 303.7L652.3 301M627.9 284.8L622.6 283.8M622.6 283.8L617 283.1M617 283.1L611.3 282.8M611.3 282.8L605.5 282.7M605.5 282.7L599.6 283M599.6 283L593.9 283.6M593.9 283.6L588.3 284.5M588.3 284.5L583 285.6M559 302.8L559.2 305.4M581.5 320.4L587.2 321.5M587.2 321.5L593.2 322.3M593.2 322.3L599.4 322.8M599.4 322.8L605.8 322.9M605.8 322.9L612.1 322.6M612.1 322.6L618.4 321.9M618.4 321.9L624.4 320.8M754.5 417.1L758.5 356.3M770.8 384.1L775.1 325.8M788.9 423.8L794.2 362.4M803.5 390L808.9 331.1M824.2 430.6L830.9 368.6M836.9 396L843.6 336.6M754.5 417.1L824.2 430.6M758.5 356.3L830.9 368.6M762.9 400.1L767.1 340.6M830.8 412.8L837.5 352.1M762.9 400.1L830.8 412.8M767.1 340.6L837.5 352.1M770.8 384.1L836.9 396M775.1 325.8L843.6 336.6M756.5 387.2L827.5 400.2M772.9 355.4L840.2 366.8" stroke="#5c5c5c" stroke-width="0.99" fill="none"/>
<path d="M613.3 286L621.3 288.8M665.3 368.3L662.6 374.8M643.3 394.1L636.9 396.8M600.1 396.3L592.7 393.5M553.7 354.8L550.9 347.6M660.4 309.9L662.8 316.5M622.4 393L615.1 396M578.3 397.8L571.7 395.4M549.2 332.7L552.5 324.9M589.3 289.4L597.2 286.3M624.7 287.4L626.4 291.8M619 376.4L616.4 382.8M585.3 397.9L583.5 393.1M589.7 313.4L592.5 305.9M593.1 370L595.7 376.8M595.7 376.8L598.5 383.1M621.6 312.8L618.6 305.4M637.8 366.4L633.4 364.7M580.9 365.7L576.6 367.6M630.6 402.3L635.6 400.4M650 321.8L643.7 319.6M568.9 321L562.6 323.5M559.1 366.3L565.5 369M640.8 370.1L647.9 367.5M651.2 306.3L652.1 303.7M641.6 289.4L637.5 287.6M578.1 287.1L573.5 288.8M559.2 305.4L560.1 308M571.7 317.2L576.3 318.9M635.2 317.8L639.8 315.9M788.9 423.8L803.5 390M824.2 430.6L836.9 396M830.9 368.6L843.6 336.6M827.5 400.2L840.2 366.8" stroke="#5c5c5c" stroke-width="0.93" fill="none"/>
<path d="M621.3 288.8L629.1 292.5M659.5 322.9L663.1 330.5M592.7 393.5L585.6 389.9M557.3 361.8L553.7 354.8M551.5 312L554.5 305.8M568.8 291L575.1 287.7M635.6 286.5L642.1 289.6M660.1 352.9L656.7 360M551.6 376.9L548.6 370.4M616.4 382.8L613.6 388.7M601.4 404.4L598.3 406M592.5 305.9L595.5 299.1M601.9 281.6L598.7 280M588.3 284.5L586.5 288.1M598.5 383.1L601.4 388.9M614 404.2L617.1 405.7M627.5 401L629.4 397.1M618.6 305.4L615.4 298.7M651.2 378.7L649.8 375.9M641.7 368.5L637.8 366.4M564.7 377.5L563.4 380.3M575 399.5L579.5 401.5M635.6 400.4L640 398.3M655.6 324.5L650 321.8M562.6 323.5L557.1 326.3M647.9 367.5L654.3 364.5M573.5 288.8L569.5 290.7M567.7 315.1L571.7 317.2M754.5 417.1L770.8 384.1M794.2 362.4L808.9 331.1M756.5 387.2L772.9 355.4" stroke="#5c5c5c" stroke-width="0.90" fill="none"/>
<path d="M629.1 292.5L636.5 297.2M654.9 315.7L659.5 322.9M662.6 374.8L659 380.8M649.2 390.5L643.3 394.1M585.6 389.9L578.8 385.5M561.6 368.5L557.3 361.8M642.1 289.6L647.9 293.6M555.4 382.7L551.6 376.9M574.5 298.4L581.7 293.4M592.5 406.1L589.8 404.4M598.6 293.2L601.9 288.2M593 280.1L590.5 281.8M601.4 388.9L604.5 394M622.8 405.5L625.3 403.8M645 370.7L641.7 368.5M640 398.3L643.7 395.9M660.5 327.5L655.6 324.5M557.1 326.3L552.2 329.5M654.3 364.5L659.8 361.2M649.5 308.9L651.2 306.3M569.5 290.7L566 292.9M564.4 312.9L567.7 315.1" stroke="#5c5c5c" stroke-width="0.84" fill="none"/>
<path d="M636.5 297.2L643.3 302.7M649.5 308.9L654.9 315.7M578.8 385.5L572.5 380.4M566.8 374.7L561.6 368.5M653 298.3L657.2 303.8M565.6 392L560.1 387.7M604.6 401.8L601.4 404.4M605.2 284.3L601.9 281.6M590.5 281.8L588.3 284.5M610.8 401.7L614 404.2M625.3 403.8L627.5 401M649.8 375.9L647.7 373.2M568 394.7L571.2 397.2M664.6 330.7L660.5 327.5M548.2 332.9L545.2 336.6M549.1 359.7L553.6 363.2M659.8 361.2L664.2 357.6M647.9 293.6L645.1 291.4M566 292.9L563.2 295.2" stroke="#5c5c5c" stroke-width="0.78" fill="none"/>
<path d="M643.3 302.7L649.5 308.9M572.5 380.4L566.8 374.7M558.4 300.1L563.2 295.2M647.9 293.6L653 298.3M647.7 373.2L642.2 379.1M560.1 387.7L555.4 382.7M561.9 310.5L567.8 304.1M607.7 398.3L610.8 401.7M569.4 372.1L566.8 374.7M545.7 356.1L549.1 359.7M561.9 310.5L564.4 312.9M647 311.4L649.5 308.9" stroke="#5c5c5c" stroke-width="0.72" fill="none"/>
<path d="M663.1 330.5L665.6 338.3M666.9 361.2L665.3 368.3M636.9 396.8L629.9 398.5M607.7 398.3L600.1 396.3M550.9 347.6L549.1 340.3M549.4 318.6L551.5 312M575.1 287.7L582 285.3M628.6 284.4L635.6 286.5M662.5 345.5L660.1 352.9M615.1 396L607.7 398.3M548.6 370.4L546.6 363.5M547 340.5L549.2 332.7M597.2 286.3L605.2 284.3M626.4 291.8L627.7 297M625.4 354.5L623.5 362.1M623.5 362.1L621.4 369.4M621.4 369.4L619 376.4M583.5 393.1L582.1 387.2M585 330.1L587.2 321.5M587.2 321.5L589.7 313.4M586.5 288.1L585 292.5M586.8 347.5L588.6 355.2M588.6 355.2L590.7 362.7M590.7 362.7L593.1 370M629.4 397.1L630.9 392.2M628.9 338.1L626.8 329.3M626.8 329.3L624.4 320.8M624.4 320.8L621.6 312.8M650.9 387.6L651.8 384.6M633.4 364.7L628.6 363.2M590.7 362.7L585.7 364M585.7 364L580.9 365.7M563 386.2L563.9 389.1M579.5 401.5L584.4 403.1M584.4 403.1L589.8 404.4M625.3 403.8L630.6 402.3M669.8 349.9L670.9 345.9M670.9 341.9L669.9 338M643.7 319.6L636.9 317.7M582.9 317.1L575.7 318.9M575.7 318.9L568.9 321M543.1 340.4L542.1 344.3M542.2 348.3L543.3 352.2M565.5 369L572.7 371.3M572.7 371.3L580.6 373.1M632.9 372.2L640.8 370.1M652.3 301L651.6 298.4M637.5 287.6L632.9 286M632.9 286L627.9 284.8M583 285.6L578.1 287.1M559.6 300.2L559 302.8M576.3 318.9L581.5 320.4M624.4 320.8L630 319.5M630 319.5L635.2 317.8" stroke="#5c5c5c" stroke-width="0.96" fill="none"/>
<path d="M659 380.8L654.5 386M654.5 386L649.2 390.5M642.2 379.1L636.1 384.4M567.8 304.1L574.5 298.4M605.2 284.3L608.5 281.4M620.3 281.2L622.6 283.8M607.7 398.3L604.6 401.8M589.8 404.4L587.4 401.7M601.9 288.2L605.2 284.3M608.6 288.1L605.2 284.3M647.7 373.2L645 370.7M565.6 392L568 394.7M643.7 395.9L646.9 393.2M646.9 393.2L649.2 390.5M667.7 334.3L664.6 330.7M552.2 329.5L548.2 332.9M664.2 357.6L667.6 353.8M650.1 295.9L647.9 293.6M563.2 295.2L561.1 297.6" stroke="#5c5c5c" stroke-width="0.75" fill="none"/>
<path d="M554.5 305.8L558.4 300.1M563.2 295.2L568.8 291M652.6 366.8L647.7 373.2M636.1 384.4L629.5 389.1M556.7 317.5L561.9 310.5M610.7 393.8L607.7 398.3M604.5 394L607.7 398.3M612 292.9L608.6 288.1M572.7 369.7L569.4 372.1M566.8 374.7L564.7 377.5M560.1 308L561.9 310.5M643.7 313.7L647 311.4" stroke="#5c5c5c" stroke-width="0.81" fill="none"/>
<path d="M657.2 303.8L660.4 309.9M656.7 360L652.6 366.8M629.5 389.1L622.4 393M571.7 395.4L565.6 392M552.5 324.9L556.7 317.5M581.7 293.4L589.3 289.4M608.5 281.4L611.7 279.7M617.6 279.6L620.3 281.2M622.6 283.8L624.7 287.4M613.6 388.7L610.7 393.8M587.4 401.7L585.3 397.9M595.5 299.1L598.6 293.2M615.4 298.7L612 292.9M649.2 390.5L650.9 387.6M576.6 367.6L572.7 369.7M563.9 389.1L565.6 392M571.2 397.2L575 399.5M667.6 353.8L669.8 349.9M669.9 338L667.7 334.3M545.2 336.6L543.1 340.4M543.3 352.2L545.7 356.1M553.6 363.2L559.1 366.3M651.6 298.4L650.1 295.9M645.1 291.4L641.6 289.4M561.1 297.6L559.6 300.2M639.8 315.9L643.7 313.7M758.5 356.3L775.1 325.8" stroke="#5c5c5c" stroke-width="0.87" fill="none"/>
<g shape-rendering="auto" font-family="Liberation Sans, sans-serif" font-size="9" fill="#a0a0a0">
<text x="597.500" y="144.200" font-size="9.300" fill="#a0a0a0">+Z</text>
<text x="805" y="378" font-size="7.500" fill="#a4a4a4">+X</text>
</g>
<rect x="984" y="484" width="4" height="4" fill="#0000e0"/><rect x="799" y="375" width="2" height="1" fill="#0000ff"/><rect x="668" y="269" width="1" height="2" fill="#00ec00"/>
</svg>
<div style="left:217px;top:590px;width:782px;height:3px;background:#ececec;"></div>
<svg style="position:absolute;left:218px;top:589px" width="20" height="5" viewBox="0 0 20 5"><path d="M1 4.500h6l-3-3.300zM12 1.500h7l-3.500 3.500z" fill="#000"/></svg>
<div style="left:217px;top:593px;width:782px;height:1px;background:#7a7a7a;"></div>
<div style="left:217px;top:594px;width:782px;height:1px;background:#666;"></div>
<div style="left:217px;top:595px;width:781px;height:90px;background:#fff;"></div>
<div style="left:217px;top:684px;width:781px;height:1px;background:#8e939c;"></div>
<div style="left:997px;top:595px;width:1px;height:90px;background:#8e939c;"></div>
<svg style="left:981px;top:595px" width="16" height="89" viewBox="981 595 16 89"><defs><linearGradient id="cv" x1="0" y1="0" x2="1" y2="0"><stop offset="0" stop-color="#f5f5f5"/><stop offset="0.45" stop-color="#e6e6e8"/><stop offset="0.5" stop-color="#d6d6d9"/><stop offset="1" stop-color="#c4c4c8"/></linearGradient><linearGradient id="ch" x1="0" y1="0" x2="0" y2="1"><stop offset="0" stop-color="#f5f5f5"/><stop offset="0.45" stop-color="#e6e6e8"/><stop offset="0.5" stop-color="#d6d6d9"/><stop offset="1" stop-color="#c4c4c8"/></linearGradient><linearGradient id="ct" x1="0" y1="0" x2="1" y2="0"><stop offset="0" stop-color="#e4e4e4"/><stop offset="0.3" stop-color="#efefef"/><stop offset="1" stop-color="#f3f3f3"/></linearGradient><linearGradient id="cu" x1="0" y1="0" x2="0" y2="1"><stop offset="0" stop-color="#e4e4e4"/><stop offset="0.3" stop-color="#efefef"/><stop offset="1" stop-color="#f3f3f3"/></linearGradient></defs><rect x="981" y="595" width="16" height="89" fill="url(#ct)"/><path d="M985.500 606.500l3.700-4 3.700 4z" fill="#404040"/><path d="M985.500 674l3.700 4 3.700-4z" fill="#404040"/><rect x="982.0" y="629.5" width="14" height="35" rx="1.500" fill="url(#cv)" stroke="#979797"/><path d="M985.5 644.5h7M985.5 647.5h7M985.5 650.5h7" stroke="#4f4f4f" stroke-width="1"/><path d="M985.5 645.5h7M985.5 648.5h7M985.5 651.5h7" stroke="#fff" stroke-width="1" opacity=".8"/></svg>
<span id="t23" class="t" style="left:219.50px;top:595.34px;font:400 12px/15px 'Liberation Sans', sans-serif;color:#808080;letter-spacing:0.267px;">Radius [double]:</span>
<span id="t24" class="t" style="left:314.00px;top:595.34px;font:400 12px/15px 'Liberation Sans', sans-serif;color:#000;">1</span>
<span id="t25" class="t" style="left:219.50px;top:610.34px;font:700 12px/15px 'Liberation Sans', sans-serif;color:#1e57a8;letter-spacing:0.571px;">command&gt;</span>
<span id="t26" class="t" style="left:293.60px;top:610.34px;font:400 12px/15px 'Liberation Sans', sans-serif;color:#000;letter-spacing:0.400px;">box</span>
<span id="t27" class="t" style="left:219.50px;top:625.34px;font:400 12px/15px 'Liberation Sans', sans-serif;color:#808080;letter-spacing:0.286px;">First corner of base [x y z]:</span>
<span id="t28" class="t" style="left:371.30px;top:625.34px;font:400 12px/15px 'Liberation Sans', sans-serif;color:#000;letter-spacing:0.500px;">2.5 -0.5 -0.5</span>
<span id="t29" class="t" style="left:219.50px;top:640.34px;font:400 12px/15px 'Liberation Sans', sans-serif;color:#808080;letter-spacing:0.357px;">Base size [width depth]:</span>
<span id="t30" class="t" style="left:358.70px;top:640.34px;font:400 12px/15px 'Liberation Sans', sans-serif;color:#000;letter-spacing:0.000px;">1 1</span>
<span id="t31" class="t" style="left:219.50px;top:655.34px;font:400 12px/15px 'Liberation Sans', sans-serif;color:#808080;letter-spacing:0.507px;">Height [double]:</span>
<span id="t32" class="t" style="left:315.50px;top:655.34px;font:400 12px/15px 'Liberation Sans', sans-serif;color:#000;">1</span>
<span id="t33" class="t" style="left:219.50px;top:670.34px;font:700 12px/15px 'Liberation Sans', sans-serif;color:#1e57a8;letter-spacing:0.571px;">command&gt;</span>
<div style="left:1000px;top:73px;width:356px;height:614px;background:#fff;"></div>
<div style="left:1000px;top:73px;width:355px;height:1px;background:#6b6b6b;"></div>
<div style="left:1000px;top:74px;width:355px;height:26px;background:#b0c4de;"></div>
<div style="left:1000px;top:100px;width:353px;height:1px;background:#8a8f98;"></div>
<div style="left:1352px;top:100px;width:1px;height:585px;background:#8a8f98;"></div>
<div style="left:1000px;top:684px;width:353px;height:1px;background:#8a8f98;"></div>
<div style="left:1000px;top:75px;width:91px;height:26px;background:#fff;border-right:1px solid #8a8f98;border-top:1px solid #aeb8c8;box-sizing:content-box;height:25px;"></div>
<span id="t34" class="t" style="left:1005.40px;top:81.19px;font:400 11px/14px 'Liberation Sans', sans-serif;color:#000;letter-spacing:-0.400px;">Process Log</span>
<svg style="position:absolute;left:1073px;top:84px" width="8" height="8" viewBox="0 0 8 8"><path d="M1.2 1.2L6.8 6.8M6.8 1.2L1.2 6.8" stroke="#000" stroke-width="1.9"/></svg>
<div style="left:1011px;top:115px;width:331px;height:528px;background:#f0f0f0;border:1px solid #828790;box-sizing:border-box;overflow:hidden;"></div>
<div class="log" style="left:1012px;top:116px;width:313px;height:509px;"><div style="position:absolute;left:2px;top:-11.100px;line-height:20px;transform:scaleY(.9);transform-origin:0 0"><div>Initializing DLLSCP...</div><div>Start program (o) 13:49:25</div><div>Start program (date) 16/09/2015</div><div>Finish program (o) 13:49:25</div><div>Finish program (date) 16/09/2015</div><div>&nbsp;</div><div>Analyzing PO...</div><div>Preprocessing Geometry ...</div><div>Starting level 0 at 3.00000000000000 GHz</div><div>Processing Surfaces (%) 0</div><div>Processing Surfaces (%) 10</div><div>Processing Surfaces (%) 20</div><div>Processing Surfaces (%) 30</div><div>Processing Surfaces (%) 40</div><div>Writing output files</div><div>Written output files</div><div>Final Number of elements: 12</div><div>Final Number of nodes: 38</div><div>&nbsp;</div><div>Analyzing GTD...</div><div>Start program (o) 13:49:31</div><div>Start program (date) 16/09/2015</div><div>Start AZB (o) 13:49:32</div><div>Start AZB (date) 16/09/2015</div><div>Finish AZB (o) 13:49:33</div><div>Finish AZB (date) 16/09/2015</div><div>Finish program (o) 13:49:33</div><div>Finish program (date) 16/09/2015</div></div></div>
<svg style="left:1012px;top:116px" width="329" height="526" viewBox="1012 116 329 526"><defs><linearGradient id="lv" x1="0" y1="0" x2="1" y2="0"><stop offset="0" stop-color="#f5f5f5"/><stop offset="0.45" stop-color="#e6e6e8"/><stop offset="0.5" stop-color="#d6d6d9"/><stop offset="1" stop-color="#c4c4c8"/></linearGradient><linearGradient id="lh" x1="0" y1="0" x2="0" y2="1"><stop offset="0" stop-color="#f5f5f5"/><stop offset="0.45" stop-color="#e6e6e8"/><stop offset="0.5" stop-color="#d6d6d9"/><stop offset="1" stop-color="#c4c4c8"/></linearGradient><linearGradient id="lt" x1="0" y1="0" x2="1" y2="0"><stop offset="0" stop-color="#e4e4e4"/><stop offset="0.3" stop-color="#efefef"/><stop offset="1" stop-color="#f3f3f3"/></linearGradient><linearGradient id="lu" x1="0" y1="0" x2="0" y2="1"><stop offset="0" stop-color="#e4e4e4"/><stop offset="0.3" stop-color="#efefef"/><stop offset="1" stop-color="#f3f3f3"/></linearGradient></defs><rect x="1325" y="116" width="16" height="509" fill="url(#lt)"/><rect x="1012" y="625" width="313" height="17" fill="url(#lu)"/><rect x="1325" y="625" width="16" height="17" fill="#f0f0f0"/><path d="M1329.500 127.500l3.800-4 3.800 4z" fill="#404040"/><path d="M1329.500 614.500l3.800 4 3.800-4z" fill="#404040"/><path d="M1022.500 629l-4 3.800 4 3.800z" fill="#404040"/><path d="M1313 629l4 3.800-4 3.800z" fill="#404040"/><rect x="1325.5" y="191.5" width="14" height="413" rx="1.500" fill="url(#lv)" stroke="#979797"/><path d="M1329 395.5h7M1329 398.5h7M1329 401.5h7" stroke="#4f4f4f" stroke-width="1"/><path d="M1329 396.5h7M1329 399.5h7M1329 402.5h7" stroke="#fff" stroke-width="1" opacity=".8"/><rect x="1030.5" y="627.0" width="264" height="14" rx="1.500" fill="url(#lh)" stroke="#979797"/><path d="M1160.0 630.5v7M1163.0 630.5v7M1166.0 630.5v7" stroke="#4f4f4f" stroke-width="1"/><path d="M1161.0 630.5v7M1164.0 630.5v7M1167.0 630.5v7" stroke="#fff" stroke-width="1" opacity=".8"/></svg>
<svg style="left:1008px;top:646px" width="340" height="30" viewBox="1008 646 340 30"><defs><linearGradient id="bn" x1="0" y1="0" x2="0" y2="1"><stop offset="0" stop-color="#f4f4f4"/><stop offset="0.48" stop-color="#ebebeb"/><stop offset="0.5" stop-color="#dddddd"/><stop offset="1" stop-color="#cfcfcf"/></linearGradient><linearGradient id="bf" x1="0" y1="0" x2="0" y2="1"><stop offset="0" stop-color="#eef7fd"/><stop offset="0.48" stop-color="#d9effc"/><stop offset="0.5" stop-color="#bee6fd"/><stop offset="1" stop-color="#a7d9f5"/></linearGradient></defs><rect x="1012.500" y="650.500" width="54" height="20" rx="2.500" fill="url(#bf)" stroke="#3c7fb1"/><rect x="1013.500" y="651.500" width="52" height="18" rx="1.500" fill="none" stroke="#46d8fb" opacity=".55"/><rect x="1014.500" y="652.500" width="50" height="16" fill="none" stroke="#000" stroke-width="1" stroke-dasharray="1 1" shape-rendering="crispEdges"/><rect x="1079.500" y="650.500" width="54" height="20" rx="2.500" fill="url(#bn)" stroke="#707070"/><rect x="1080.500" y="651.500" width="52" height="18" rx="1.500" fill="none" stroke="#fcfcfc" opacity=".9"/><rect x="1284.500" y="650.500" width="56" height="20" rx="2.500" fill="#f4f4f4" stroke="#adb2b5"/></svg>
<span id="t35" class="t" style="left:1025.40px;top:653.19px;font:400 11px/14px 'Liberation Sans', sans-serif;color:#000;letter-spacing:-0.450px;">Clear</span>
<span id="t36" class="t" style="left:1093.00px;top:653.19px;font:400 11px/14px 'Liberation Sans', sans-serif;color:#000;letter-spacing:-0.333px;">Save</span>
<span id="t37" class="t" style="left:1299.00px;top:653.19px;font:400 11px/14px 'Liberation Sans', sans-serif;color:#838383;letter-spacing:0.000px;">Abort</span>
<div style="left:10px;top:693px;width:1346px;height:24px;background:#b0c4de;border-left:2px solid #6b6b6b;border-top:2px solid #6b6b6b;border-right:2px solid #fff;border-bottom:2px solid #fff;box-sizing:border-box;"></div>
<div style="left:10px;top:693px;width:1344px;height:1px;background:#8f8f8f;"></div>
<div style="left:10px;top:694px;width:1px;height:21px;background:#8f8f8f;"></div>
<span id="t38" class="t" style="left:21.80px;top:698.19px;font:400 11px/14px 'Liberation Sans', sans-serif;color:#000;letter-spacing:-0.100px;">X:</span>
<span id="t39" class="t" style="left:37.40px;top:698.19px;font:400 11px/14px 'Liberation Sans', sans-serif;color:#000;letter-spacing:0.200px;">5.115941</span>
<span id="t40" class="t" style="left:123.60px;top:698.19px;font:400 11px/14px 'Liberation Sans', sans-serif;color:#000;letter-spacing:0.200px;">Y:</span>
<span id="t41" class="t" style="left:140.60px;top:698.19px;font:400 11px/14px 'Liberation Sans', sans-serif;color:#000;letter-spacing:-0.050px;">-9.671531</span>
<span id="t42" class="t" style="left:226.20px;top:698.19px;font:400 11px/14px 'Liberation Sans', sans-serif;color:#000;letter-spacing:-0.700px;">Z:</span>
<span id="t43" class="t" style="left:241.90px;top:698.19px;font:400 11px/14px 'Liberation Sans', sans-serif;color:#000;letter-spacing:0.171px;">5.361161</span>
<svg style="left:300px;top:694px" width="1056" height="24" viewBox="300 694 1056 24"><defs><linearGradient id="cb" x1="0" y1="0" x2="0" y2="1"><stop offset="0" stop-color="#f6f6f6"/><stop offset="0.48" stop-color="#ececec"/><stop offset="0.5" stop-color="#dedede"/><stop offset="1" stop-color="#d2d2d2"/></linearGradient><linearGradient id="pg" x1="0" y1="0" x2="0" y2="1"><stop offset="0" stop-color="#f4f4f4"/><stop offset="0.35" stop-color="#dadada"/><stop offset="0.6" stop-color="#cdcdcd"/><stop offset="1" stop-color="#cacaca"/></linearGradient></defs><rect x="320.5" y="696.500" width="85" height="18" rx="2.500" fill="url(#cb)" stroke="#8f959c"/><rect x="321.5" y="697.500" width="83" height="16" rx="1.500" fill="none" stroke="#fff" opacity=".8"/><path d="M393 705.500h7l-3.500 3.500z" fill="#000"/><rect x="424" y="695" width="1" height="20" fill="#7d838c"/><rect x="425" y="695" width="1" height="20" fill="#fff"/><rect x="469.5" y="696.500" width="132" height="18" rx="2.500" fill="url(#cb)" stroke="#8f959c"/><rect x="470.5" y="697.500" width="130" height="16" rx="1.500" fill="none" stroke="#fff" opacity=".8"/><path d="M589 705.500h7l-3.500 3.500z" fill="#000"/><rect x="673.5" y="696.500" width="130" height="18" rx="2.500" fill="url(#cb)" stroke="#8f959c"/><rect x="674.5" y="697.500" width="128" height="16" rx="1.500" fill="none" stroke="#fff" opacity=".8"/><path d="M791 705.500h7l-3.500 3.500z" fill="#000"/><rect x="822" y="695" width="1" height="20" fill="#7d838c"/><rect x="823" y="695" width="1" height="20" fill="#fff"/><rect x="1044" y="696" width="300" height="16" fill="url(#pg)"/><rect x="1044" y="696" width="300" height="1" fill="#a3a3a3"/><rect x="1044" y="697" width="300" height="1" fill="#fbfbfb"/><rect x="1044" y="710" width="300" height="1" fill="#e6e6e6"/><rect x="1044" y="711" width="300" height="1" fill="#8c8c8c"/><rect x="1343" y="697" width="1" height="14" fill="#b0b0b0"/><rect x="1043" y="696" width="2" height="16" fill="#3a78e8"/></svg>
<span id="t44" class="t" style="left:323.50px;top:698.19px;font:400 11px/14px 'Liberation Sans', sans-serif;color:#000;letter-spacing:0.000px;">Meters</span>
<span id="t45" class="t" style="left:441.60px;top:698.19px;font:400 11px/14px 'Liberation Sans', sans-serif;color:#000;letter-spacing:-0.400px;">Pick:</span>
<span id="t46" class="t" style="left:471.70px;top:698.19px;font:400 11px/14px 'Liberation Sans', sans-serif;color:#000;letter-spacing:-0.700px;">PICK_NEAR</span>
<span id="t47" class="t" style="left:620.80px;top:698.19px;font:400 11px/14px 'Liberation Sans', sans-serif;color:#000;letter-spacing:-0.222px;">Selection:</span>
<span id="t48" class="t" style="left:675.50px;top:698.19px;font:400 11px/14px 'Liberation Sans', sans-serif;color:#000;letter-spacing:-0.700px;transform:scaleX(0.981);transform-origin:0 0;">SELECTION_ALL</span>
<span id="t49" class="t" style="left:1178.70px;top:696.19px;font:400 11px/14px 'Liberation Sans', sans-serif;color:#3a8cf5;letter-spacing:0.000px;">Done.</span>
</body></html>
